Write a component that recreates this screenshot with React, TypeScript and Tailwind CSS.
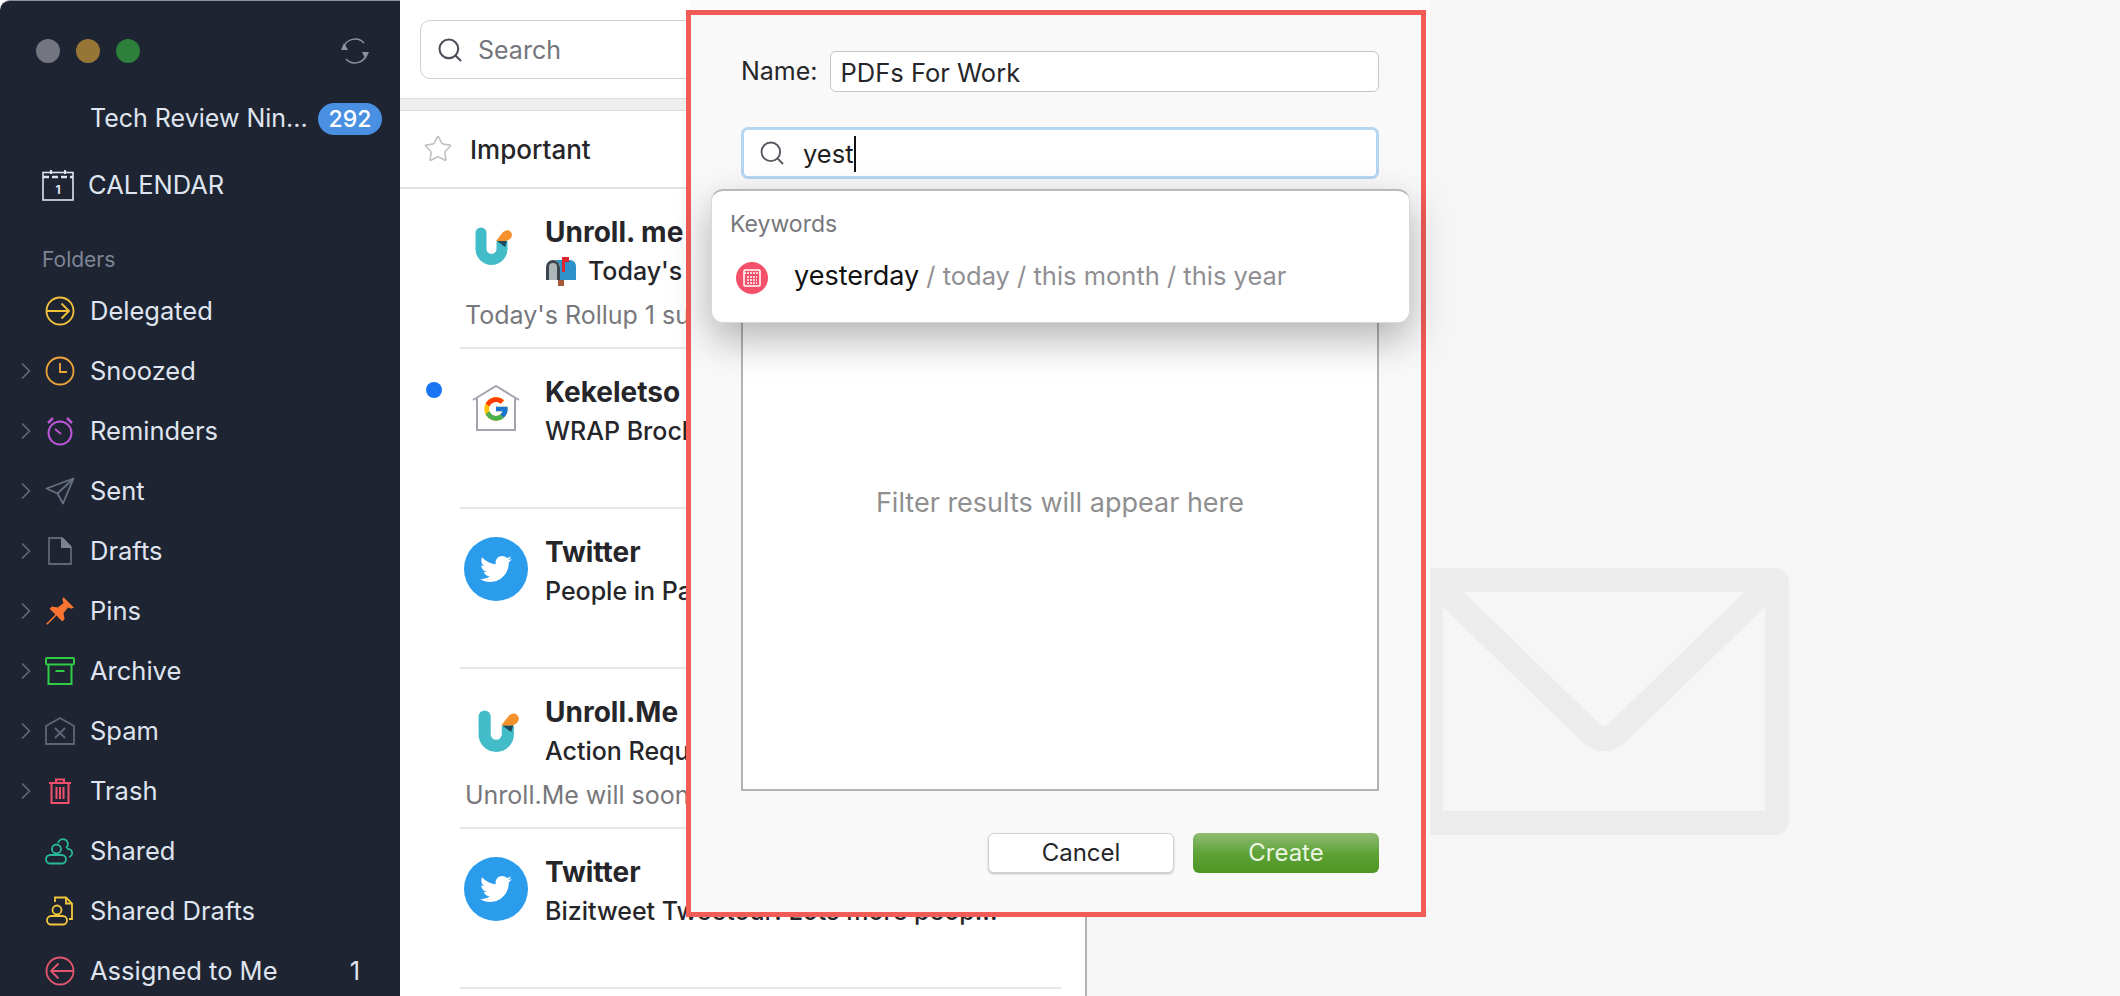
import type { ReactNode } from "react";
import { ChevronRight, Search, Star } from "lucide-react";
import { FaTwitter } from "react-icons/fa";
import { FcGoogle } from "react-icons/fc";

function SyncIcon() {
    return (
        <svg width="30" height="28" viewBox="0 0 30 28" fill="none" stroke="#8b92a0" strokeWidth="1.500">
            <path d="M3.500 11a12 12 0 0 1 20.500-5" />
            <path d="M26.500 17a12 12 0 0 1-20.500 5" />
            <path d="M4 6l4 7H1z" fill="#8b92a0" stroke="none" />
            <path d="M25.500 22l-3.500-7h7z" fill="#8b92a0" stroke="none" />
        </svg>
    );
}

function CalendarIcon() {
    return (
        <svg width="32" height="32" viewBox="0 0 32 32" fill="none" stroke="#dfe4ef" strokeWidth="1.600">
            <rect x="1" y="3.500" width="30" height="27.500" />
            <path d="M1 8h30" strokeWidth="2.500" strokeDasharray="6 3" />
            <path d="M9 1v4M23 1v4" strokeWidth="2" />
            <text x="16" y="25" textAnchor="middle" fontSize="12" fontWeight="700" fill="#dfe4ef" stroke="none" fontFamily="Inter, sans-serif">
                1
            </text>
        </svg>
    );
}

function DelegatedIcon() {
    return (
        <svg width="30" height="30" viewBox="0 0 30 30" fill="none" stroke="#f3c23c" strokeWidth="1.800">
            <circle cx="15" cy="15" r="13.500" />
            <path d="M1.500 15H24M16.500 7.500 24 15l-7.500 7.500" />
        </svg>
    );
}

function ClockIcon() {
    return (
        <svg width="30" height="30" viewBox="0 0 30 30" fill="none" stroke="#f0a53a" strokeWidth="1.800">
            <circle cx="15" cy="15" r="13.500" />
            <path d="M15 7v9h7" />
        </svg>
    );
}

function AlarmIcon() {
    return (
        <svg width="28" height="30" viewBox="0 0 28 30" fill="none" stroke="#bb57d6" strokeWidth="2">
            <circle cx="14" cy="17" r="11.500" />
            <path d="M9 13l6 5" />
            <path d="M2 7l5-5M26 7l-5-5" strokeWidth="2.500" />
        </svg>
    );
}

function SentIcon() {
    return (
        <svg width="30" height="28" viewBox="0 0 30 28" fill="none" stroke="#697080" strokeWidth="1.800" strokeLinejoin="round">
            <path d="M1.500 11.500 28.500 1.500 18 26.500 12.500 16.500z" />
            <path d="M12.500 16.500 28.500 1.500" />
        </svg>
    );
}

function DraftIcon() {
    return (
        <svg width="24" height="28" viewBox="0 0 24 28" fill="none">
            <path d="M1 1h13l9 9v17H1z" stroke="#5f6676" strokeWidth="1.800" />
            <path d="M13 1h2l8 8v2H13z" fill="#7c8290" />
        </svg>
    );
}

function PinIcon() {
    return (
        <svg width="30" height="30" viewBox="0 0 26 26">
            <path d="M16 1l9 9-2 1-3-1-4 5 1 5-2 2-5-5-8 8-1-1 8-8-5-5 2-2 5 1 5-4-1-3z" fill="#f97432" />
        </svg>
    );
}

function ArchiveIcon() {
    return (
        <svg width="30" height="28" viewBox="0 0 30 28" fill="none" stroke="#2ecb44" strokeWidth="2">
            <rect x="1" y="1" width="28" height="6.500" rx="1" />
            <path d="M3.500 7.500V27h23V7.500M10.500 14h9" />
        </svg>
    );
}

function SpamIcon() {
    return (
        <svg width="30" height="28" viewBox="0 0 30 28" fill="none" stroke="#5f6676" strokeWidth="1.800">
            <path d="M1 9 15 1l14 8v18H1z" />
            <path d="M10 11l10 10M20 11 10 21" />
        </svg>
    );
}

function TrashIcon() {
    return (
        <svg width="24" height="26" viewBox="0 0 24 26" fill="none" stroke="#f0506e" strokeWidth="2">
            <path d="M1 5h22M8 5V1.500h8V5M3.500 5v20h17V5M8.500 9v12M12 9v12M15.500 9v12" />
        </svg>
    );
}

function SharedIcon() {
    return (
        <svg width="30" height="28" viewBox="0 0 30 28" fill="none" stroke="#27b99a" strokeWidth="1.800">
            <circle cx="11.500" cy="12" r="4.500" />
            <rect x="1" y="18" width="20" height="8.500" rx="4.250" />
            <path d="M13 6a5 5 0 1 1 8 5M22 12a4 4 0 0 1 2 8" />
        </svg>
    );
}

function SharedDraftIcon() {
    return (
        <svg width="28" height="30" viewBox="0 0 28 30" fill="none" stroke="#f3c93c" strokeWidth="1.800">
            <circle cx="11" cy="14" r="4.500" />
            <rect x="1" y="20" width="20" height="8.500" rx="4.250" />
            <path d="M9 6V1.500h11l6 6V23h-3" />
            <path d="M20 1.500v6h6" />
        </svg>
    );
}

function AssignedIcon() {
    return (
        <svg width="30" height="30" viewBox="0 0 30 30" fill="none" stroke="#e4566f" strokeWidth="1.800">
            <circle cx="15" cy="15" r="13.500" />
            <path d="M28.500 15H6M13.500 7.500 6 15l7.500 7.500" />
        </svg>
    );
}

const folders: { name: string; icon: ReactNode; chevron?: boolean; count?: number }[] = [
    { name: "Delegated", icon: <DelegatedIcon /> },
    { name: "Snoozed", icon: <ClockIcon />, chevron: true },
    { name: "Reminders", icon: <AlarmIcon />, chevron: true },
    { name: "Sent", icon: <SentIcon />, chevron: true },
    { name: "Drafts", icon: <DraftIcon />, chevron: true },
    { name: "Pins", icon: <PinIcon />, chevron: true },
    { name: "Archive", icon: <ArchiveIcon />, chevron: true },
    { name: "Spam", icon: <SpamIcon />, chevron: true },
    { name: "Trash", icon: <TrashIcon />, chevron: true },
    { name: "Shared", icon: <SharedIcon /> },
    { name: "Shared Drafts", icon: <SharedDraftIcon /> },
    { name: "Assigned to Me", icon: <AssignedIcon />, count: 1 },
];

function Sidebar() {
    return (
        <aside className="w-[400px] h-full shrink-0 bg-[#1e2432] rounded-tl-[10px] border-t border-[#8d9098] text-[#dfe4ef] text-[25.5px] overflow-hidden">
            <div className="flex items-center pt-[36px] pl-[36px] pr-[30px]">
                <div className="flex gap-4">
                    <span className="w-6 h-6 rounded-full bg-[#73767e]" />
                    <span className="w-6 h-6 rounded-full bg-[#957637]" />
                    <span className="w-6 h-6 rounded-full bg-[#2d7f3a]" />
                </div>
                <div className="ml-auto">
                    <SyncIcon />
                </div>
            </div>
            <div className="flex items-center h-10 mt-[34px] pl-[90px] pr-[18px]">
                <span className="text-[25px]">Tech Review Nin...</span>
                <span className="ml-auto w-16 h-8 rounded-full bg-[#4a90e2] text-white text-[23px] font-medium flex items-center justify-center">292</span>
            </div>
            <div className="flex items-center h-10 mt-[26px] pl-[42px] gap-[14px]">
                <CalendarIcon />
                <span>CALENDAR</span>
            </div>
            <div className="h-6 mt-[43px] pl-[42px] text-[21px] leading-6 text-[#7e8595]">Folders</div>
            <div className="mt-[9px]">
                {folders.map((f) => (
                    <div key={f.name} className="flex items-center h-[60px] pr-[40px]">
                        <div className="w-[44px] pl-[12px] shrink-0">
                            {f.chevron && <ChevronRight className="w-7 h-7 text-[#626979]" strokeWidth={1.500} />}
                        </div>
                        <div className="w-8 flex items-center justify-center shrink-0">{f.icon}</div>
                        <span className="ml-[14px]">{f.name}</span>
                        {f.count && <span className="ml-auto">{f.count}</span>}
                    </div>
                ))}
            </div>
        </aside>
    );
}

function UnrollLogo({ size }: { size: number }) {
    return (
        <svg width={size} height={size} viewBox="0 0 38 38" fill="none">
            <path d="M6 6v16a10.500 10.500 0 0 0 21 0v-6" stroke="#43bcc9" strokeWidth="11" strokeLinecap="round" />
            <path d="M22 14h10l-2 6z" fill="#1d4a5c" />
            <path d="M21 14 28 5Q32 2 35 4 39 8 35 12 33 14 29 14z" fill="#f5912d" />
        </svg>
    );
}

function TwitterAvatar() {
    return (
        <div className="w-16 h-16 rounded-full bg-[#2b9cec] flex items-center justify-center">
            <FaTwitter className="w-8 h-8 text-white" />
        </div>
    );
}

function GoogleAvatar() {
    return (
        <div className="relative w-12 h-[46px]">
            <svg width="48" height="46" viewBox="0 0 48 46" fill="none" stroke="#a2a5ad" strokeWidth="2">
                <path d="M1 15 24 1l23 14M5 13v32h38V13" />
            </svg>
            <FcGoogle className="absolute left-[10px] top-[10px] w-[28px] h-[28px]" />
        </div>
    );
}

function MailboxEmoji() {
    return (
        <svg width="32" height="30" viewBox="0 0 32 30" className="shrink-0">
            <path d="M1 24V11a7 7 0 0 1 14 0v13z" fill="#3c454b" />
            <path d="M4 24V11a4 4 0 0 1 8 0v13z" fill="#aeb6ba" />
            <path d="M9 4h16a6 6 0 0 1 6 6v14H15V11a7 7 0 0 0-6-7z" fill="#2d92c9" />
            <path d="M17 1h7v5h-4v10h-3z" fill="#e0252f" />
            <rect x="13" y="24" width="6" height="6" fill="#a5583a" />
        </svg>
    );
}

const mails: { from: string; subject: ReactNode; preview?: string; avatar: ReactNode; unread?: boolean }[] = [
    {
        from: "Unroll. me",
        subject: (
            <span className="flex items-center gap-[11px]">
                <MailboxEmoji />
                Today's Rollup
            </span>
        ),
        preview: "Today's Rollup 1 subscription",
        avatar: (
            <div className="pl-[11px] pt-[10px]">
                <UnrollLogo size={38} />
            </div>
        ),
    },
    {
        from: "Kekeletso",
        subject: "WRAP Brochure",
        avatar: (
            <div className="pl-2 pt-[8px]">
                <GoogleAvatar />
            </div>
        ),
        unread: true,
    },
    { from: "Twitter", subject: "People in Pakistan", avatar: <TwitterAvatar /> },
    {
        from: "Unroll.Me",
        subject: "Action Required",
        preview: "Unroll.Me will soon stop",
        avatar: (
            <div className="pl-[14px] pt-[13px]">
                <UnrollLogo size={42} />
            </div>
        ),
    },
    { from: "Twitter", subject: "Bizitweet Tweetour: Lots more peop...", avatar: <TwitterAvatar /> },
];

function MailList() {
    return (
        <section className="w-[687px] h-full shrink-0 bg-white border-r-2 border-[#b4b4b4] overflow-hidden">
            <div className="h-[98px] pt-5 px-5">
                <div className="flex items-center h-[59px] rounded-[10px] border border-[#d0d0d0] pl-[15px] gap-[14px] text-[25px] text-[#75757c]">
                    <Search className="w-[28px] h-[28px] text-[#4c4f58]" strokeWidth={1.800} />
                    <span className="mt-[2px]">Search</span>
                </div>
            </div>
            <div className="h-[13px] bg-[#efefef] border-y border-[#dcdcdc]" />
            <div className="flex items-center h-[78px] pl-[23px] gap-[17px] border-b-2 border-[#e2e2e2]">
                <Star className="w-[30px] h-[30px] text-[#c2c2c2]" strokeWidth={1.300} />
                <span className="text-[26px] font-medium text-[#26262a]">Important</span>
            </div>
            {mails.map((m, i) => (
                <div key={i} className="relative h-[160px] pt-[28px] pl-[64px]">
                    {m.unread && <span className="absolute left-[26px] top-[33px] w-4 h-4 rounded-full bg-[#1a76f2]" />}
                    <div className="flex gap-[17px]">
                        <div className="w-16 shrink-0">{m.avatar}</div>
                        <div className="text-[#26262a]">
                            <div className="h-[30px] leading-[30px] text-[28px] font-bold">{m.from}</div>
                            <div className="h-[30px] leading-[30px] mt-[9px] text-[25px] font-medium whitespace-nowrap">{m.subject}</div>
                        </div>
                    </div>
                    {m.preview && <div className="absolute left-[65px] top-[111px] h-[30px] leading-[30px] text-[25px] text-[#77777c] whitespace-nowrap">{m.preview}</div>}
                    <div className="absolute left-[60px] right-[24px] bottom-0 h-[2px] bg-[#e6e6e6]" />
                </div>
            ))}
        </section>
    );
}

function EmptyPane() {
    return (
        <section className="flex-1 h-full bg-[#f6f6f6] flex justify-center pt-[568px]">
            <svg width="370" height="267" viewBox="0 0 370 267" fill="none">
                <path d="M14 0h342a14 14 0 0 1 14 14v239a14 14 0 0 1-14 14H14a14 14 0 0 1-14-14V14A14 14 0 0 1 14 0zM24 24v219h322V24z" fill="#ececec" fillRule="evenodd" />
                <path d="M10 8 172 165q13 11 26 0L360 8" stroke="#ececec" strokeWidth="25" />
            </svg>
        </section>
    );
}

function FilterDialog() {
    return (
        <div className="absolute left-[686px] top-[10px] w-[740px] h-[907px] border-[5px] border-[#f25c57] bg-[#f9f9f9] shadow-[4px_-10px_0_0_#fbfbfb] pt-[36px] pl-[50px] pr-[42px] text-[25.5px] text-[#26262a] flex flex-col">
            <div className="flex items-center gap-[12px] h-[41px]">
                <span className="text-[25px]">Name:</span>
                <div className="flex-1 h-full rounded-[6px] border border-[#c6c6c6] bg-white px-[10px] leading-[41px]">PDFs For Work</div>
            </div>
            <div className="flex items-center h-[52px] mt-[35px] rounded-[7px] border-[3px] border-[#b5d6f3] bg-white pl-[14px] gap-[17px]">
                <Search className="w-[28px] h-[28px] text-[#55585f]" strokeWidth={1.600} />
                <span className="text-[#1f1f22] border-r-2 border-[#111] leading-[36px] mt-[2px]">yest</span>
            </div>
            <div className="relative flex-none flex items-center justify-center h-[576px] mt-[36px] bg-white border-2 border-[#b3b3b3] text-[27px] text-[#8f8f8f]">
                Filter results will appear here
            </div>
            <div className="flex justify-end gap-[19px] mt-[42px]">
                <button className="w-[186px] h-10 rounded-[6px] bg-white border border-[#d2d2d2] shadow-[0_1px_2px_rgba(0,0,0,0.25)] text-[24px] text-[#26262a]">Cancel</button>
                <button className="w-[186px] h-10 rounded-[6px] bg-gradient-to-b from-[#8fbc72] via-[#5ea337] to-[#4c9621] text-[24px] text-[#eaf5e3]">Create</button>
            </div>
            <div className="absolute left-[20px] top-[174px] w-[699px] h-[134px] rounded-[12px] bg-white border border-[#d8d8d8] border-t-2 border-t-[#b9b9b9] shadow-[0_16px_40px_rgba(0,0,0,0.3)] pl-[18px]">
                <div className="pt-[18px] h-[52px] leading-[30px] text-[23px] text-[#77777c]">Keywords</div>
                <div className="flex items-center h-[50px] mt-[8px] gap-[26px] pl-[6px]">
                    <svg width="32" height="32" viewBox="0 0 32 32" className="mt-[4px]">
                        <circle cx="16" cy="16" r="16" fill="#f4506a" />
                        <rect x="8" y="8" width="16" height="16" rx="1" fill="none" stroke="#ffffff" strokeWidth="1.500" />
                        <path d="M8 11h16M11 15h10M11 18h10M11 21h10" stroke="#ffffff" strokeWidth="1.500" strokeDasharray="2 1" />
                    </svg>
                    <span className="text-[25.5px]">
                        <span className="text-[27px] text-[#111]">yesterday</span>
                        <span className="text-[#8f8f93]"> / today / this month / this year</span>
                    </span>
                </div>
            </div>
        </div>
    );
}

export default function App() {
    return (
        <div className="relative flex w-[2120px] h-[996px] overflow-hidden bg-white font-['Inter',sans-serif]">
            <Sidebar />
            <MailList />
            <EmptyPane />
            <FilterDialog />
        </div>
    );
}
